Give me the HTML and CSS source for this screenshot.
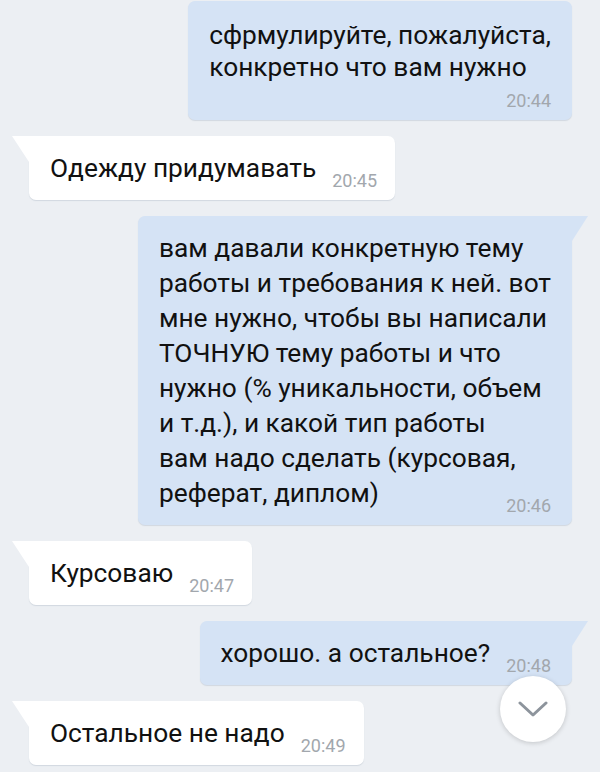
FILE: index.html
```html
<!DOCTYPE html>
<html lang="ru">
<head>
<meta charset="utf-8">
<title>Диалог</title>
<link rel="stylesheet" href="styles.css">
</head>
<body>
<main class="chat">
  <div class="bubble bubble--out bubble--stacked">сфрмулируйте, пожалуйста,<br>конкретно что вам нужно<span class="time">20:44</span></div>
  <div class="bubble bubble--in">Одежду придумавать<span class="time">20:45</span></div>
  <div class="bubble bubble--out bubble--tail">вам давали конкретную тему<br>работы и требования к ней. вот<br>мне нужно, чтобы вы написали<br>ТОЧНУЮ тему работы и что<br>нужно (% уникальности, объем<br>и т.д.), и какой тип работы<br>вам надо сделать (курсовая,<br>реферат, диплом)<span class="time">20:46</span></div>
  <div class="bubble bubble--in">Курсоваю<span class="time">20:47</span></div>
  <div class="bubble bubble--out bubble--tail">хорошо. а остальное?<span class="time">20:48</span></div>
  <div class="bubble bubble--in">Остальное не надо<span class="time">20:49</span></div>
</main>
<button class="scroll-down" type="button" aria-label="Вниз">
  <svg width="30" height="16" viewBox="0 0 30 16"><polyline points="2,2 15,14 28,2" fill="none" stroke="#8d949c" stroke-width="3" stroke-linecap="round" stroke-linejoin="round"/></svg>
</button>
</body>
</html>
```

FILE: styles.css
```css
html, body {
  margin: 0;
  height: 100%;
}
body {
  background: #eceff3;
  overflow: hidden;
  position: relative;
  font-family: Roboto, "Noto Sans", sans-serif;
}
.chat {
  display: flex;
  flex-direction: column;
  gap: 16px;
  padding-top: 1px;
}
.bubble {
  position: relative;
  padding: 15px 21px 9px;
  border-radius: 7px;
  font-size: 26.3px;
  line-height: 35px;
  color: #111;
  box-shadow: 0 1px 1px rgba(90, 110, 140, 0.18);
}
.bubble--in {
  align-self: flex-start;
  margin-left: 29px;
  padding-right: 18px;
  background: #ffffff;
  border-top-left-radius: 0;
}
.bubble--in::before {
  content: "";
  position: absolute;
  left: -17px;
  top: 0;
  width: 17px;
  height: 26px;
  background: #ffffff;
  clip-path: polygon(0 0, 100% 0, 100% 100%);
}
.bubble--out {
  align-self: flex-end;
  margin-right: 28px;
  background: #d5e3f5;
}
.bubble--tail {
  border-top-right-radius: 0;
}
.bubble--tail::after {
  content: "";
  position: absolute;
  right: -16px;
  top: 0;
  width: 16px;
  height: 25px;
  background: #d5e3f5;
  clip-path: polygon(0 0, 100% 0, 0 100%);
}
.time {
  float: right;
  margin: 20px 0 0 16px;
  font-size: 18px;
  line-height: 20px;
  color: #a2a7ad;
}
.bubble--stacked {
  padding-top: 18px;
  line-height: 32px;
}
.bubble--stacked .time {
  float: none;
  display: block;
  text-align: right;
  margin: 8px 0 0;
  line-height: 20px;
}
.scroll-down {
  position: absolute;
  left: 500px;
  top: 676px;
  width: 66px;
  height: 66px;
  border: 0;
  padding: 0;
  border-radius: 50%;
  background: #ffffff;
  box-shadow: 0 1px 5px rgba(0, 0, 0, 0.18);
  display: flex;
  align-items: center;
  justify-content: center;
}
```
